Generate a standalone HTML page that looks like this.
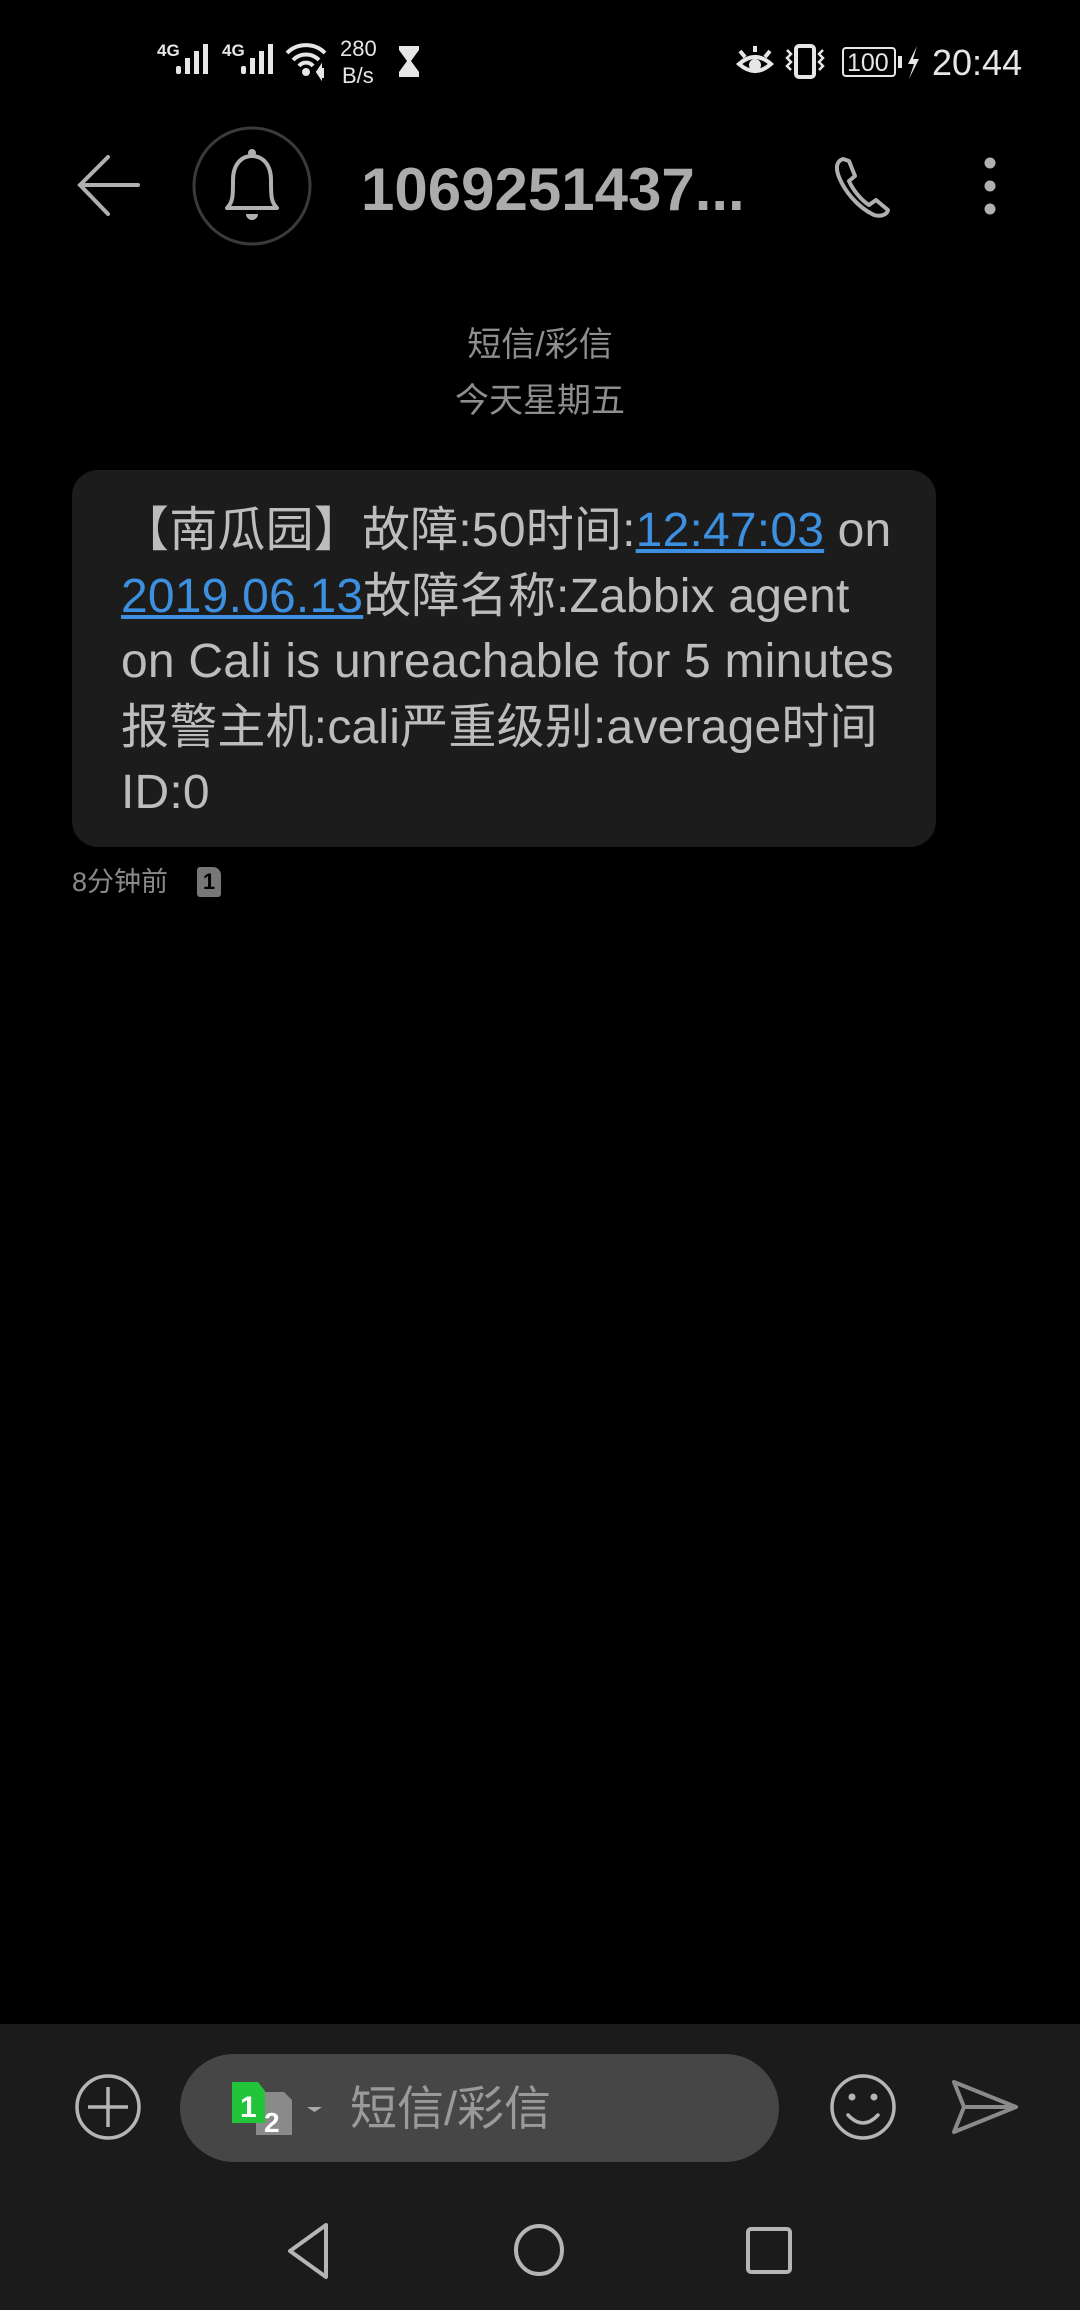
<!DOCTYPE html>
<html><head><meta charset="utf-8"><style>
*{margin:0;padding:0;box-sizing:border-box}
html,body{width:1080px;height:2310px;background:#000;overflow:hidden;font-family:"Liberation Sans","Noto Sans CJK SC",sans-serif}
.abs{position:absolute}
</style></head><body>
<svg class="abs" style="left:0;top:0" width="1080" height="100">
 <g fill="#e6e6e6">
  <text x="157" y="56" font-family="Liberation Sans" font-weight="bold" font-size="17">4G</text>
  <rect x="176" y="66" width="5" height="8" rx="2"/><rect x="185" y="58" width="5" height="16"/><rect x="194" y="51" width="5" height="23"/><rect x="203" y="44" width="5" height="30"/>
  <text x="222" y="56" font-family="Liberation Sans" font-weight="bold" font-size="17">4G</text>
  <rect x="241" y="66" width="5" height="8" rx="2"/><rect x="250" y="58" width="5" height="16"/><rect x="259" y="51" width="5" height="23"/><rect x="268" y="44" width="5" height="30"/>
  <circle cx="306" cy="72" r="4"/>
  <text x="340" y="56" font-family="Liberation Sans" font-size="22">280</text>
  <text x="342" y="83" font-family="Liberation Sans" font-size="22">B/s</text>
  <path d="M399 46h20v4l-8 11 8 11v5h-20v-5l8-11-8-11z"/>
 </g>
 <g fill="none" stroke="#e6e6e6" stroke-width="4">
  <path d="M287 53a27 27 0 0 1 38 0"/><path d="M293 60a18 18 0 0 1 26 0"/><path d="M299 66a9 9 0 0 1 14 0"/>
 </g>
 <path d="M317 72l4-6v12z M323 68v10" stroke="#e6e6e6" stroke-width="2" fill="#e6e6e6"/>
 <g fill="none" stroke="#e6e6e6" stroke-width="4">
  <path d="M739 64q16-14 32 0q-16 14-32 0z"/><path d="M740 51l5 6M755 46v6M770 51l-5 6"/>
  <rect x="796" y="46" width="18" height="31" rx="3"/>
  <path d="M787 50l4 4-4 4 4 4-4 4 4 4M823 50l-4 4 4 4-4 4 4 4-4 4" stroke-width="2.5"/>
 </g>
 <circle cx="755" cy="65" r="6" fill="#e6e6e6"/>
 <rect x="843" y="48" width="52" height="28" rx="3" fill="none" stroke="#e6e6e6" stroke-width="2"/>
 <text x="847" y="71" font-family="Liberation Sans" font-size="25" fill="#e6e6e6">100</text>
 <rect x="898" y="56" width="4" height="12" fill="#e6e6e6"/>
 <path d="M917 46l-9 18h6l-5 15 10-20h-6z" fill="#e6e6e6"/>
 <text x="932" y="75" font-family="Liberation Sans" font-size="36" fill="#e6e6e6">20:44</text>
</svg>
<svg class="abs" style="left:0;top:120" width="1080" height="140">
 <g fill="none" stroke="#b0b0b0" stroke-width="4" stroke-linecap="round">
  <path d="M138 65H80M108 37L80 65l28 29"/>
 </g>
 <circle cx="252" cy="66" r="58" fill="none" stroke="#3a3a3a" stroke-width="3"/>
 <g fill="none" stroke="#b0b0b0" stroke-width="4" stroke-linejoin="round">
  <path d="M227 88c6-6 6-12 6-28 0-15 8-24 19-24s19 9 19 24c0 16 0 22 6 28z"/>
 </g>
 <circle cx="252" cy="33" r="4" fill="#b0b0b0"/>
 <path d="M246 94a6 6 0 0 0 12 0z" fill="#b0b0b0"/>
 <text x="361" y="90" font-family="Liberation Sans" font-weight="bold" font-size="60" fill="#ababab">1069251437...</text>
 <path d="M843 39c-6 2-8 8-4 18 5 13 18 30 35 38 6 2 13 0 14-5l-12-10-7 5c-8-5-16-15-20-24l6-5-6-15z" fill="none" stroke="#b0b0b0" stroke-width="4" stroke-linejoin="round"/>
 <circle cx="990" cy="43" r="5.5" fill="#b0b0b0"/><circle cx="990" cy="66" r="5.5" fill="#b0b0b0"/><circle cx="990" cy="89" r="5.5" fill="#b0b0b0"/>
</svg>
<div class="abs" style="left:0;width:1080px;top:325px;text-align:center;color:#8e8e8e;font-size:34px;line-height:40px">短信/彩信</div>
<div class="abs" style="left:0;width:1080px;top:381px;text-align:center;color:#8e8e8e;font-size:34px;line-height:40px">今天星期五</div>
<div class="abs" style="left:72px;top:470px;width:864px;height:377px;background:#1c1c1c;border-radius:26px"></div>
<div class="abs" style="left:121px;top:498px;color:#bdbdbd;font-size:48px;line-height:65.5px;white-space:nowrap;letter-spacing:0.2px">
<span>【南瓜园】故障:50时间:<span style="color:#3d8fe0;text-decoration:underline">12:47:03</span> on</span><br>
<span style="color:#3d8fe0;text-decoration:underline">2019.06.13</span>故障名称:Zabbix agent<br>
on Cali is unreachable for 5 minutes<br>
报警主机:cali严重级别:average时间<br>
ID:0
</div>
<div class="abs" style="left:72px;top:865px;color:#8a8a8a;font-size:27px;line-height:34px">8分钟前</div>
<div class="abs" style="left:197px;top:867px;width:24px;height:30px;background:#777;border-radius:3px 8px 3px 3px;color:#000;font-size:22px;font-weight:bold;text-align:center;line-height:30px">1</div>
<div class="abs" style="left:0;top:2024px;width:1080px;height:286px;background:#1b1b1b"></div>
<div class="abs" style="left:180px;top:2054px;width:599px;height:108px;background:#464646;border-radius:54px"></div>
<svg class="abs" style="left:0;top:2024" width="1080" height="286">
 <g fill="none" stroke="#b5b5b5" stroke-width="3.5">
  <circle cx="108" cy="83" r="31"/><path d="M108 63v40M88 83h40"/>
  <circle cx="863" cy="83" r="31"/>
  <path d="M848 91q15 16 30 0" stroke-linecap="round"/>
 </g>
 <circle cx="852" cy="73" r="3.5" fill="#b5b5b5"/><circle cx="874" cy="73" r="3.5" fill="#b5b5b5"/>
 <path d="M954 58l62 25-62 25 10-25z M964 83h52" fill="none" stroke="#8a8a8a" stroke-width="4" stroke-linejoin="round"/>
 <path d="M256 68h28l8 8v35h-36z" fill="#8a8a8a"/>
 <path d="M232 58h26l7 9v32h-33z" fill="#22c43a"/>
 <text x="240" y="93" font-family="Liberation Sans" font-weight="bold" font-size="30" fill="#fff">1</text>
 <text x="264" y="108" font-family="Liberation Sans" font-weight="bold" font-size="28" fill="#fff">2</text>
 <path d="M307 83h15l-7.5 5z" fill="#aaa"/>
 <g fill="none" stroke="#b5b5b5" stroke-width="4" stroke-linejoin="round">
  <path d="M326 201l-36 26 36 26z"/>
  <ellipse cx="539" cy="226" rx="23" ry="24"/>
  <rect x="748" y="205" width="42" height="43" rx="3"/>
 </g>
</svg>
<div class="abs" style="left:350px;top:2082px;color:#9a9a9a;font-size:47px;line-height:54px">短信/彩信</div>
</body></html>
